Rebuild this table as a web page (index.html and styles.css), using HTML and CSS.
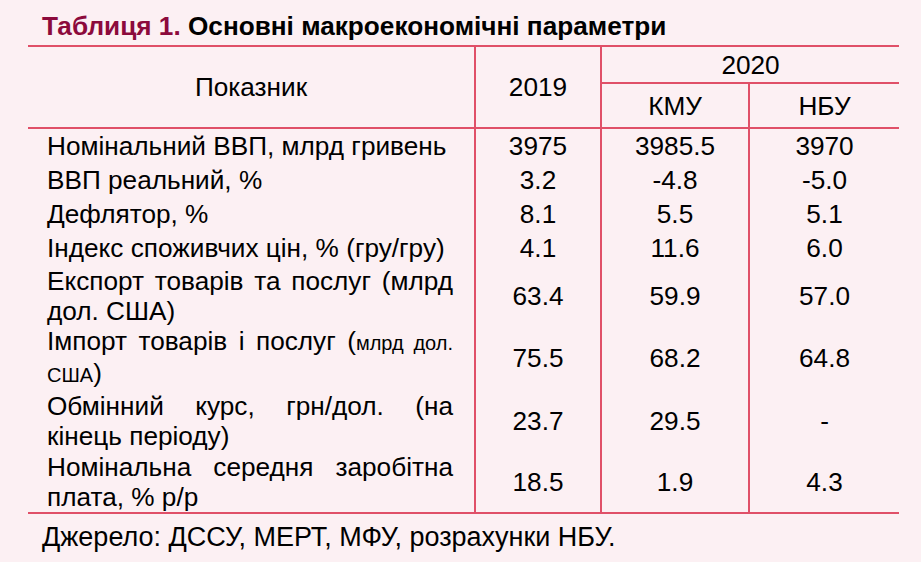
FILE: index.html
```html
<!DOCTYPE html>
<html lang="uk">
<head>
<meta charset="utf-8">
<title>Таблиця 1</title>
<link rel="stylesheet" href="styles.css">
</head>
<body>
<div class="page">
  <h1 class="title"><span class="title-num">Таблиця 1.</span> Основні макроекономічні параметри</h1>
  <table class="macro">
    <colgroup>
      <col class="c-name"><col class="c-2019"><col class="c-kmu"><col class="c-nbu">
    </colgroup>
    <thead>
      <tr class="h1">
        <th rowspan="2" class="name-h">Показник</th>
        <th rowspan="2" class="sep">2019</th>
        <th colspan="2" class="sep y2020">2020</th>
      </tr>
      <tr class="h2">
        <th class="sep sub">КМУ</th>
        <th class="sep sub">НБУ</th>
      </tr>
    </thead>
    <tbody>
      <tr class="single">
        <td class="name">Номінальний ВВП, млрд гривень</td><td class="sep">3975</td><td class="sep">3985.5</td><td class="sep">3970</td>
      </tr>
      <tr class="single">
        <td class="name">ВВП реальний, %</td><td class="sep">3.2</td><td class="sep">-4.8</td><td class="sep">-5.0</td>
      </tr>
      <tr class="single">
        <td class="name">Дефлятор, %</td><td class="sep">8.1</td><td class="sep">5.5</td><td class="sep">5.1</td>
      </tr>
      <tr class="single">
        <td class="name">Індекс споживчих цін, % (гру/гру)</td><td class="sep">4.1</td><td class="sep">11.6</td><td class="sep">6.0</td>
      </tr>
      <tr class="double">
        <td class="name"><span class="line-j">Експорт товарів та послуг (млрд</span>дол. США)</td><td class="sep">63.4</td><td class="sep">59.9</td><td class="sep">57.0</td>
      </tr>
      <tr class="double">
        <td class="name"><span class="line-j">Імпорт товарів і послуг (<span class="small">млрд дол.</span></span><span class="small">США</span>)</td><td class="sep">75.5</td><td class="sep">68.2</td><td class="sep">64.8</td>
      </tr>
      <tr class="double">
        <td class="name"><span class="line-j">Обмінний курс, грн/дол. (на</span>кінець періоду)</td><td class="sep">23.7</td><td class="sep">29.5</td><td class="sep">-</td>
      </tr>
      <tr class="double last">
        <td class="name"><span class="line-j">Номінальна середня заробітна</span>плата, % р/р</td><td class="sep">18.5</td><td class="sep">1.9</td><td class="sep">4.3</td>
      </tr>
    </tbody>
  </table>
  <p class="source">Джерело: ДССУ, МЕРТ, МФУ, розрахунки НБУ.</p>
</div>
</body>
</html>
```

FILE: styles.css
```css
html, body {
  margin: 0;
  padding: 0;
  background: #fcf0f3;
}

body {
  font-family: "Liberation Sans", Arial, sans-serif;
  color: #000;
}

.page {
  padding: 11px 0 0 28px;
}

.title {
  margin: 0 0 4px 14px;
  font-size: 26.2px;
  line-height: 30px;
  font-weight: bold;
}

.title-num {
  color: #8c0a3c;
}

.macro {
  border-collapse: collapse;
  table-layout: fixed;
  width: 871px;
  font-size: 26.2px;
  line-height: 30px;
}

.c-name { width: 447px; }
.c-2019 { width: 126px; }
.c-kmu { width: 148px; }
.c-nbu { width: 150px; }

.macro th,
.macro td {
  padding: 0;
  font-weight: normal;
  text-align: center;
  vertical-align: middle;
}

.macro thead th {
  border-top: 2px solid #e05068;
  border-bottom: 2px solid #e05068;
}

.macro .sep {
  border-left: 2px solid #e05068;
}

.y2020 {
  height: 35px;
}

.sub {
  height: 43px;
}

.single td {
  height: 34px;
}

.double td {
  height: 61px;
}

.last td {
  border-bottom: 2px solid #e05068;
}

.macro .name {
  text-align: left;
  padding: 0 21px 0 19px;
}

.line-j {
  display: block;
  text-align: justify;
  text-align-last: justify;
}

.small {
  font-size: 20px;
}

.source {
  margin: 8px 0 0 14px;
  font-size: 27px;
  line-height: 30px;
}
```
